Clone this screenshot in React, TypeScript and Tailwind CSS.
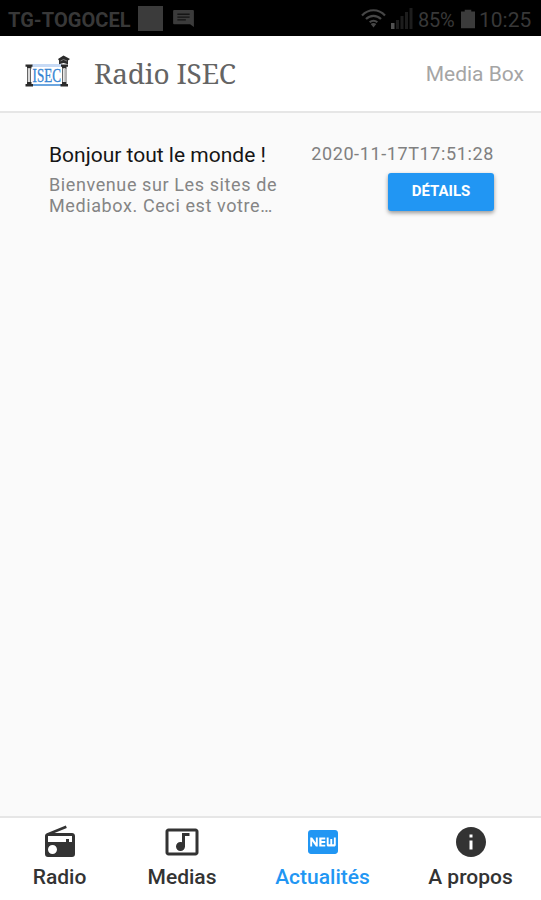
import type { ReactNode } from "react";
import { MdFiberNew, MdInfo, MdMusicVideo, MdRadio } from "react-icons/md";

function StatusBar() {
  return (
    <div className="flex h-9 shrink-0 items-center bg-black pl-2 pr-[9px] text-[#383838]">
      <span className="w-[122px] whitespace-nowrap pt-[3px] text-[20px] font-bold leading-6 tracking-[0.05px]">TG-TOGOCEL</span>
      <span className="ml-[8px] size-[25px] bg-[#3b3b3b]" />
      <svg className="ml-[10px] h-[17px] w-[21px]" viewBox="0 0 22 18" fill="none">
        <path d="M1 0h20a1 1 0 0 1 1 1v17l-4-3H1a1 1 0 0 1-1-1V1a1 1 0 0 1 1-1Z" fill="#3b3b3b" />
        <path d="M4.5 4.5h13M4.5 7.5h13M4.5 10.5h9" stroke="#151515" strokeWidth="1.4" />
      </svg>
      <div className="ml-auto flex items-center">
        <svg className="h-[19px] w-[25px]" viewBox="0 0 25 19" fill="none" stroke="#464646" strokeWidth="2.2">
          <path d="M1 6.4C7.5-.5 17.5-.5 24 6.4M5 10c4.3-4.3 10.7-4.3 15 0M8.7 13.3c2.2-2 5.4-2 7.6 0" />
          <path d="m9.7 15 2.8 3.5 2.8-3.5c-1.7-1.4-3.9-1.4-5.6 0Z" fill="#464646" stroke="none" />
        </svg>
        <svg className="ml-[5px] h-[22px] w-[22px]" viewBox="0 0 22 22">
          <path d="M0 16h3.5v6H0z" fill="#505050" />
          <path d="M5 13h3v9H5zM9.5 9h3v13h-3zM14 5h3v17h-3zM18.5 1h3v21h-3z" fill="#1d1d1d" />
        </svg>
        <span className="ml-[5px] w-[38px] whitespace-nowrap pt-[3px] text-[20px] leading-6 tracking-[-0.2px]">85%</span>
        <svg className="ml-[5px] mt-[2px] h-5 w-[14px]" viewBox="0 0 15 20" fill="#3b3b3b"><path d="M4 0h7v2h4v18H0V2h4z" /></svg>
        <span className="ml-[4px] w-[53px] whitespace-nowrap pt-[3px] text-[21px] leading-6">10:25</span>
      </div>
    </div>
  );
}

function Logo() {
  return (
    <svg className="h-8 w-[46px] shrink-0" viewBox="0 0 46 32">
      <path d="M7 9h30v3H7z" fill="#c7daf5" />
      <path d="M7 29h29v2H7z" fill="#6ba5df" />
      <g fill="#2b2b2b">
        <path d="M.5 9.5h7v2.2h-7zM36 9.5h7v2.2h-7zM.5 29h7.5v2.5H.5zM35.5 29H43v2.5h-7.5z" />
        <path d="M2 11h4.5v2.5H2zM37 11h4.5v2.5H37zM2 27h4.5v2H2zM37 27h4.5v2H37z" />
        <path d="m38.5.5 6.500 3.500-2 1.500v3.800l-4.500-1.300-4.500 1.300V5.500L33 4z" />
      </g>
      <path d="M2.5 13v14M5.5 13v14M37.5 13v14M41 13v14" stroke="#666" />
      <path d="M4 13v14M39.3 13v14" stroke="#ccc" strokeWidth="1.5" />
      <path d="m35.5 6 3-1.5 3.500 1.500" stroke="#999" strokeWidth=".7" fill="none" />
      <text x="7.5" y="26.5" textLength="28.5" lengthAdjust="spacingAndGlyphs" className="font-['Liberation_Serif',serif] text-[18px]" fill="#3584d2" stroke="#3584d2" strokeWidth=".3">ISEC</text>
    </svg>
  );
}

function Tab({ icon, label, className }: { icon: ReactNode; label: string; className: string }) {
  return (
    <button className={`flex flex-col items-center pt-[5.5px] ${className}`}>
      {icon}
      <span className="mt-[5px] whitespace-nowrap text-[21px] font-medium leading-6">{label}</span>
    </button>
  );
}

export default function App() {
  return (
    <div className="flex h-[900px] w-[541px] flex-col overflow-hidden bg-[#fafafa] font-['Roboto',sans-serif]">
      <StatusBar />
      <header className="flex h-[77px] shrink-0 items-center border-b-2 border-[#e6e6e6] bg-white pl-[25px] pr-[17px]">
        <div className="flex pb-[5px]"><Logo /></div>
        <h1 className="ml-[23px] whitespace-nowrap pb-[2px] font-['Noto_Serif','DejaVu_Serif',serif] text-[28px] leading-8 tracking-[-0.2px] text-[#646464]">Radio ISEC</h1>
        <span className="ml-auto whitespace-nowrap text-[21px] leading-6 text-[#a5a5a5]">Media Box</span>
      </header>
      <main className="flex flex-1 items-start justify-between pl-[49px] pr-[47px] pt-[29px]">
        <div>
          <h2 className="whitespace-nowrap text-[21px] leading-[26px] text-[#151515]">Bonjour tout le monde !</h2>
          <p className="mt-[6px] whitespace-nowrap text-[18px] leading-[21px] tracking-[0.6px] text-[#858585]">Bienvenue sur Les sites de<br />Mediabox. Ceci est votre…</p>
        </div>
        <div className="flex flex-col items-end">
          <time className="whitespace-nowrap text-[18px] leading-6 tracking-[0.62px] text-[#808080]">2020-11-17T17:51:28</time>
          <button className="mt-[7px] h-[38px] w-[106px] rounded-[3px] bg-[#2196f3] pb-[2px] text-[15px] font-bold text-white shadow-[0_2px_4px_rgba(0,0,0,0.4)]">DÉTAILS</button>
        </div>
      </main>
      <nav className="flex h-[84px] shrink-0 border-t-2 border-[#e6e6e6] bg-white text-[#333]">
        <Tab className="w-[119px]" icon={<MdRadio className="size-9" />} label="Radio" />
        <Tab className="w-[126px]" icon={<MdMusicVideo className="size-9" />} label="Medias" />
        <Tab className="w-[155px] text-[#2196f3]" icon={<MdFiberNew className="size-9" />} label="Actualités" />
        <Tab className="w-[141px]" icon={<MdInfo className="size-9" />} label="A propos" />
      </nav>
    </div>
  );
}
